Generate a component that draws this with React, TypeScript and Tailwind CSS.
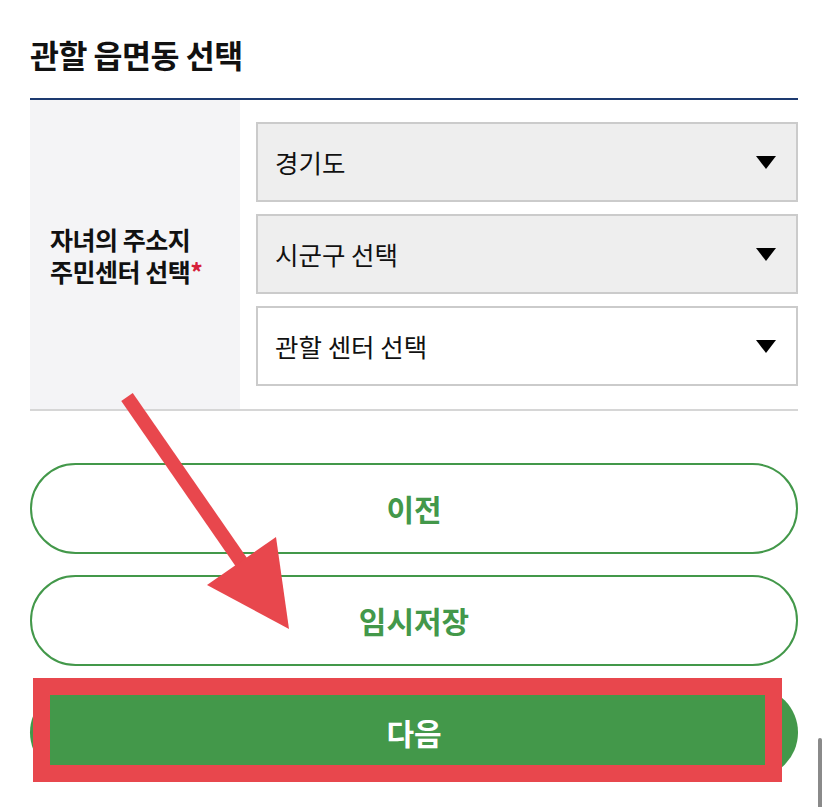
import React from 'react';

const font = "font-['Noto_Sans_CJK_KR','Noto_Sans',sans-serif]";

const Caret = () => (
  <svg width="20" height="13" viewBox="0 0 20 13" className="shrink-0">
    <path d="M0 0h20L10 13z" fill="#000" />
  </svg>
);

const Select: React.FC<{ label: string; filled?: boolean }> = ({ label, filled }) => (
  <div
    className={`flex h-[80px] items-center justify-between border-2 border-[#cbcbcb] pl-[17px] pr-[20px] ${
      filled ? 'bg-[#eeeeee]' : 'bg-white'
    }`}
  >
    <span className="text-[25.5px] leading-none text-[#111]">{label}</span>
    <Caret />
  </div>
);

export default function App() {
  return (
    <div className={`relative h-[807px] w-[828px] overflow-hidden bg-white px-[30px] ${font}`}>
      {/* Title */}
      <div className="flex h-[98px] items-start pt-[33px]">
        <h2 className="text-[31.5px] font-bold leading-[42px] tracking-[-0.5px] text-[#111]">관할 읍면동 선택</h2>
      </div>

      {/* Form row */}
      <div className="flex border-t-2 border-b-2 border-t-[#1d3a70] border-b-[#d6d6d6]">
        <div className="flex w-[210px] shrink-0 items-center bg-[#f4f4f6] pl-[20px]">
          <p className="text-[25px] font-bold leading-[32px] tracking-[-0.5px] text-[#111]">
            자녀의 주소지
            <br />
            주민센터 선택<span className="text-[#d6213a]">*</span>
          </p>
        </div>
        <div className="flex flex-1 flex-col gap-[12px] pt-[22px] pb-[23px] pl-[16px]">
          <Select label="경기도" filled />
          <Select label="시군구 선택" filled />
          <Select label="관할 센터 선택" />
        </div>
      </div>

      {/* Buttons */}
      <div className="mt-[52px] flex flex-col gap-[21px]">
        <button className="flex h-[91px] items-center justify-center rounded-full border-2 border-[#43984a] bg-white text-[30px] font-bold text-[#43984a]">
          이전
        </button>
        <button className="flex h-[91px] items-center justify-center rounded-full border-2 border-[#43984a] bg-white text-[30px] font-bold text-[#43984a]">
          임시저장
        </button>
        <button className="flex h-[91px] items-center justify-center rounded-full bg-[#43984a] text-[30px] font-bold text-white">
          다음
        </button>
      </div>

      {/* Annotation: red highlight box */}
      <div className="pointer-events-none absolute left-[33px] top-[678px] h-[104px] w-[749px] border-[17px] border-[#e8474d]" />

      {/* Annotation: red arrow */}
      <svg className="pointer-events-none absolute left-0 top-0" width="828" height="807" viewBox="0 0 828 807">
        <line x1="127" y1="397" x2="244" y2="566" stroke="#e8474d" strokeWidth="14" />
        <path d="M207 585L276 537L289 629Z" fill="#e8474d" />
      </svg>

      {/* Scrollbar */}
      <div className="absolute right-[6px] top-[738px] h-[80px] w-[4px] rounded-full bg-[#8a8a8a]" />
    </div>
  );
}
